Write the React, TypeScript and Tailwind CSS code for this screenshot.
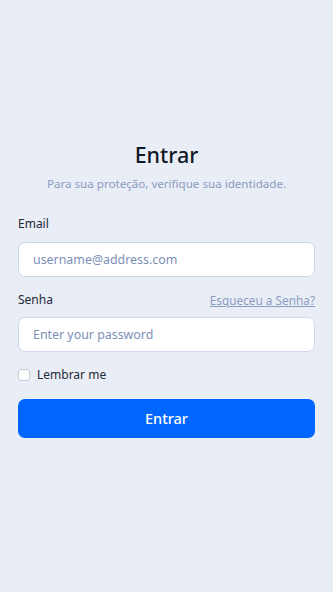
import { useState } from "react";

export default function App() {
  const [remember, setRemember] = useState(false);
  return (
    <div
      className="flex h-[592px] w-full flex-col bg-[#e9edf5] px-[18px] pt-[140px]"
      style={{ fontFamily: '"Noto Sans", "Open Sans", sans-serif' }}
    >
      <h1 className="text-center text-[21.5px] leading-[30px] font-medium text-[#111827]">Entrar</h1>
      <p className="mt-[5px] text-center text-[11.6px] leading-[18px] text-[#8a9cc0]">
        Para sua proteção, verifique sua identidade.
      </p>

      <label className="mt-[22px] text-[12px] leading-[18px] text-[#1f2937]">Email</label>
      <input
        type="email"
        placeholder="username@address.com"
        className="mt-[9px] h-[35px] w-full rounded-[7px] border border-[#cfd8e8] bg-white px-[14px] text-[12.4px] text-[#1f2937] outline-none placeholder:text-[#7c90b8]"
      />

      <div className="mt-[14px] flex items-center justify-between">
        <label className="text-[12px] leading-[18px] text-[#1f2937]">Senha</label>
        <a href="#" className="text-[11.8px] leading-[18px] text-[#8a9cc0] underline">
          Esqueceu a Senha?
        </a>
      </div>
      <input
        type="password"
        placeholder="Enter your password"
        className="mt-[8px] h-[35px] w-full rounded-[7px] border border-[#cfd8e8] bg-white px-[14px] text-[12.4px] text-[#1f2937] outline-none placeholder:text-[#7c90b8]"
      />

      <label className="mt-[14px] flex items-center gap-[7px] text-[12px] leading-[18px] text-[#1f2937]">
        <input
          type="checkbox"
          checked={remember}
          onChange={(e) => setRemember(e.target.checked)}
          className="h-[12px] w-[12px] appearance-none rounded-[3px] border border-[#c3cbd9] bg-white"
        />
        Lembrar me
      </label>

      <button className="mt-[15px] h-[39px] w-full rounded-[7px] bg-[#0066ff] text-[14.5px] font-medium text-white">
        Entrar
      </button>
    </div>
  );
}
